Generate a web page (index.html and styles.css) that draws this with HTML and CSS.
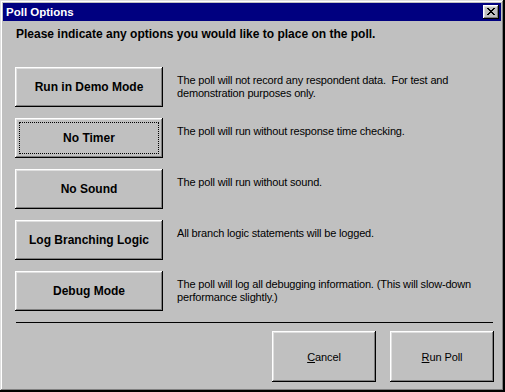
FILE: index.html
```html
<!DOCTYPE html>
<html lang="en">
<head>
    <meta charset="UTF-8">
    <title>Poll Options</title>
    <link rel="stylesheet" href="styles.css">
</head>
<body>
    <div class="window">
        <div class="titlebar">
            <span class="title">Poll Options</span>
            <button class="close-btn" aria-label="Close">
                <svg width="8" height="7" viewBox="0 0 8 7" shape-rendering="crispEdges">
                    <path d="M0 0h2v1h-2z M6 0h2v1h-2z M1 1h2v1h-2z M5 1h2v1h-2z M2 2h4v1h-4z M3 3h2v1h-2z M2 4h4v1h-4z M1 5h2v1h-2z M5 5h2v1h-2z M0 6h2v1h-2z M6 6h2v1h-2z" fill="#000"/>
                </svg>
            </button>
        </div>

        <div class="content">
            <p class="prompt">Please indicate any options you would like to place on the poll.</p>

            <ul class="options">
                <li class="option">
                    <button class="btn option-btn">Run in Demo Mode</button>
                    <p class="option-desc">The poll will not record any respondent data.&nbsp; For test and<br>demonstration purposes only.</p>
                </li>
                <li class="option">
                    <button class="btn option-btn focused">No Timer</button>
                    <p class="option-desc">The poll will run without response time checking.</p>
                </li>
                <li class="option">
                    <button class="btn option-btn">No Sound</button>
                    <p class="option-desc">The poll will run without sound.</p>
                </li>
                <li class="option">
                    <button class="btn option-btn">Log Branching Logic</button>
                    <p class="option-desc">All branch logic statements will be logged.</p>
                </li>
                <li class="option">
                    <button class="btn option-btn">Debug Mode</button>
                    <p class="option-desc">The poll will log all debugging information. (This will slow-down<br>performance slightly.)</p>
                </li>
            </ul>

            <div class="divider"></div>

            <div class="actions">
                <button class="btn action-btn"><u>C</u>ancel</button>
                <button class="btn action-btn"><u>R</u>un Poll</button>
            </div>
        </div>
    </div>
</body>
</html>
```

FILE: styles.css
```css
body {
    margin: 0;
    background: #000;
    font-family: "Liberation Sans", Arial, sans-serif;
    font-size: 11px;
    line-height: 13px;
    color: #000;
}

/* window frame */
.window {
    width: 504px;
    height: 391px;
    box-sizing: border-box;
    padding: 3px;
    background: #c0c0c0;
    box-shadow:
        inset -1px -1px #000,
        inset 1px 1px #dfdfdf,
        inset -2px -2px #808080,
        inset 2px 2px #fff;
}

.titlebar {
    height: 18px;
    background: #000080;
    display: flex;
    align-items: center;
    justify-content: space-between;
    padding: 0 2px 0 3px;
}

.title {
    color: #fff;
    font-weight: bold;
    font-size: 11.5px;
}

.close-btn {
    width: 16px;
    height: 14px;
    padding: 0;
    border: none;
    background: #c0c0c0;
    display: flex;
    align-items: center;
    justify-content: center;
    box-shadow:
        inset -1px -1px #000,
        inset 1px 1px #fff,
        inset -2px -2px #808080,
        inset 2px 2px #dfdfdf;
}

.close-btn svg {
    display: block;
    margin: 0 0 1px 0;
}

.content {
    padding: 0 7px 0 12px;
}

.prompt {
    margin: 7px 0 0 1px;
    font-weight: bold;
    font-size: 12px;
}

/* buttons */
.btn {
    font-family: inherit;
    font-size: 11px;
    color: #000;
    background: #c0c0c0;
    border: none;
    padding: 0;
    box-shadow:
        inset -1px -1px #000,
        inset 1px 1px #fff,
        inset -2px -2px #808080,
        inset 2px 2px #dfdfdf;
}

.options {
    list-style: none;
    margin: 26px 0 0 0;
    padding: 0;
    display: flex;
    flex-direction: column;
    gap: 11px;
}

.option {
    display: flex;
    gap: 14px;
}

.option-btn {
    flex: none;
    width: 148px;
    height: 40px;
    font-weight: bold;
    font-size: 12px;
}

.focused {
    outline: 1px dotted #000;
    outline-offset: -5px;
}

.option-desc {
    margin: 0;
    padding-top: 7px;
    letter-spacing: -0.17px;
}

.divider {
    margin: 11px 1px 0 1px;
    border-top: 1px solid #000;
}

.actions {
    margin-top: 8px;
    display: flex;
    justify-content: flex-end;
    gap: 14px;
}

.action-btn {
    width: 104px;
    height: 51px;
    letter-spacing: -0.1px;
}
```
